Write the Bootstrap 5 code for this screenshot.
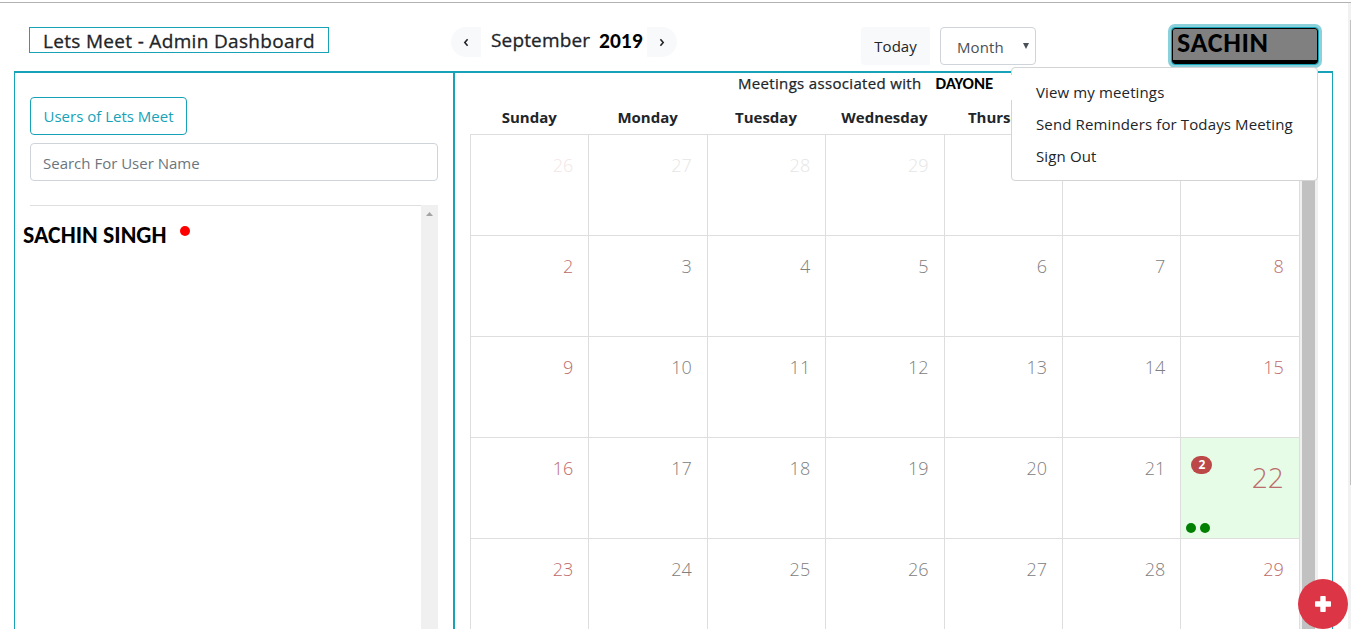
<!DOCTYPE html>
<html lang="en">
<head>
<meta charset="utf-8">
<title>Lets Meet - Admin Dashboard</title>
<link href="https://cdn.jsdelivr.net/npm/bootstrap@5.3.0/dist/css/bootstrap.min.css" rel="stylesheet">
<style>
:root { --teal: #17a2b8; --line: #dedede; }
body { font-family: "Open Sans", "Noto Sans", sans-serif; font-size: 15px; line-height: 24px; color: #212529; height: 629px; overflow: hidden; }
.window-edge { height: 3px; border-bottom: 1px solid #b3b3b3; }
.topbar { height: 68px; padding: 24px 31px 0 29px; }
.page-title { width: 300px; height: 26px; border: 1px solid var(--teal); padding-left: 13px; font-size: 19px; font-weight: 500; line-height: 26px; letter-spacing: .32px; -webkit-text-stroke: .3px; }
.month-nav { margin-left: 122px; height: 30px; }
.nav-arrow { width: 30px; height: 30px; background: #f8f9fa; border: 0; padding: 0; }
.month-name { width: 108px; padding-left: 10px; font-size: 19px; font-weight: 500; line-height: 26px; letter-spacing: .15px; -webkit-text-stroke: .3px; }
.pasted { font-family: Carlito, "Open Sans", sans-serif; font-weight: 700; color: #000; white-space: nowrap; }
.year { width: 58px; padding-left: 10px; font-size: 21.5px; line-height: 28px; }
.btn { --bs-btn-font-size: 15px; --bs-btn-line-height: 24px; --bs-btn-border-radius: 4px; white-space: nowrap; }
.btn-today { margin-left: 184px; width: 69px; height: 38px; padding: 0; background: #f8f9fa; border: 0; border-radius: 4px 0 0 4px; line-height: 24px; }
.view-select { margin-left: 10px; width: 96px; height: 38px; border: 1px solid #ced4da; border-radius: 4px; color: #495057; padding: 7px 6px 0 16px; letter-spacing: .1px; }
.account { margin-left: auto; margin-right: 2px; margin-top: 1px; width: 146px; height: 36px; background: #808080; border: 1px solid #000; border-bottom-width: 4px; border-radius: 3px; outline: 1px solid var(--teal); box-shadow: 0 0 0 4px #8bd1dc; padding-left: 4px; font-size: 28px; line-height: 27px; letter-spacing: .6px; }
.workspace { height: 558px; margin-left: 14px; width: 1319px; border: solid var(--teal); border-width: 2px 1px 0; }
.users { width: 440px; border-right: 2px solid var(--teal); padding: 24px 15px 0; }
.btn-users { width: 157px; height: 38px; color: var(--teal); border: 1px solid var(--teal); padding: 6px 0; background: #fff; }
.form-control { height: 38px; margin-top: 8px; border: 1px solid #ced4da; border-radius: 4px; font-size: 15px; padding: 7px 12px 5px; }
.form-control::placeholder { color: #6c757d; }
.user-list { margin-top: 24px; height: 424px; border-top: 1px solid var(--line); }
.user-name { width: 144px; margin: 15px 0 0 -7px; font-size: 23.8px; line-height: 27px; }
.offline { width: 10px; height: 10px; background: red; margin: 20px 0 0 13px; }
.list-scroll { width: 17px; background: #f0f0f0; margin-top: -1px; padding-top: 7px; }
.calendar { padding-left: 15px; width: 845px; }
.assoc { height: 22px; padding-left: 268px; font-weight: 500; line-height: 21px; white-space: nowrap; letter-spacing: .33px; -webkit-text-stroke: .25px; }
.dayone { font-size: 16.8px; margin-left: 14px; letter-spacing: 0; -webkit-text-stroke: 0; }
.week { display: grid; grid-template-columns: repeat(7, 118.4px); }
.weekdays { height: 39px; width: 829px; font-weight: 700; text-align: center; line-height: 45px; }
.weeks { width: 829.8px; border-left: 1px solid var(--line); }
.day { height: 101px; border-top: 1px solid var(--line); border-right: 1px solid var(--line); text-align: right; padding: 17px 15px 0 0; font-size: 18px; font-weight: 300; line-height: 27px; color: #808080; }
.week > .day:first-child, .week > .day:last-child { color: #bd6b6b; }
.outside { color: #e6e6e6; }
.week > .outside:first-child, .week > .outside:last-child { color: #f3e6e6; }
.week > .today { background: #e6fce6; color: #b87970; font-size: 28px; line-height: 40px; padding-top: 19px; padding-right: 15px; }
.meeting-count { left: 10px; top: 18px; width: 21px; height: 18px; border-radius: 9px; background: #bd4848; color: #fff; font-size: 12px; font-weight: 700; line-height: 18px; text-align: center; }
.meeting-dots { left: 5px; bottom: 5px; gap: 4px; }
.meeting-dots span { width: 10px; height: 10px; background: green; }
.cal-scroll { width: 18px; background: #f0f0f0; padding: 0 3px 0 2px; margin-top: 61px; }
.cal-scroll div { background: #c1c1c1; height: 100%; }
.account-menu { display: block; left: 1011px; top: 67px; width: 307px; height: 114px; padding: 8px 0; border: 1px solid #d3d4d5; border-radius: 4px; }
.account-menu .dropdown-item { font-size: 15px; line-height: 24px; padding: 4px 24px; letter-spacing: .13px; }
.menu-gap { left: 1000px; top: 75px; width: 12px; height: 25px; background: #fff; z-index: 1001; }
.fab { left: 1298px; top: 579px; width: 50px; height: 50px; background: #dc3545; z-index: 5; }
.page-scroll { left: 1348px; top: 3px; width: 3px; height: 626px; background: #f1f1f1; padding: 17px 0 0 2px; }
.page-scroll div { height: 465px; background: #c1c1c1; }
</style>
</head>
<body class="position-relative bg-white">
<div class="window-edge"></div>
<header class="topbar d-flex align-items-start">
  <h1 class="page-title mb-0 text-nowrap">Lets Meet - Admin Dashboard</h1>
  <div class="month-nav d-flex">
    <button class="nav-arrow rounded-start-pill" aria-label="Previous"><svg class="d-block mx-auto" width="8" height="10" viewBox="0 0 8 10" fill="none" stroke="#212529" stroke-width="1.6"><path d="M5.6 2.3 2.8 5.5 5.6 8.7"/></svg></button>
    <div class="month-name">September</div>
    <div class="year pasted">2019</div>
    <button class="nav-arrow rounded-end-pill" aria-label="Next"><svg class="d-block mx-auto" width="8" height="10" viewBox="0 0 8 10" fill="none" stroke="#212529" stroke-width="1.6"><path d="M2.4 2.3 5.2 5.5 2.4 8.7"/></svg></button>
  </div>
  <button class="btn btn-today">Today</button>
  <div class="view-select d-flex justify-content-between"><span>Month</span><svg class="mt-2" width="6" height="6" viewBox="0 0 6 6"><path d="M0 0h6L3 6z" fill="#495057"/></svg></div>
  <div class="account pasted">SACHIN</div>
</header>
<main class="workspace d-flex">
  <section class="users flex-shrink-0">
    <button class="btn btn-users d-block">Users of Lets Meet</button>
    <input class="form-control" placeholder="Search For User Name">
    <div class="user-list d-flex">
      <div class="user-name pasted">SACHIN SINGH</div>
      <span class="offline rounded-circle"></span>
      <div class="list-scroll ms-auto"><svg class="d-block mx-auto" width="7" height="4" viewBox="0 0 7 4"><path d="M0 4h7L3.5 0z" fill="#a3a3a3"/></svg></div>
    </div>
  </section>
  <section class="calendar flex-shrink-0">
    <div class="assoc"><span>Meetings associated with</span><span class="dayone pasted">DAYONE</span></div>
    <div class="week weekdays"><div>Sunday</div><div>Monday</div><div>Tuesday</div><div>Wednesday</div><div>Thursday</div><div></div><div></div></div>
    <div class="weeks">
      <div class="week"><div class="day outside">26</div><div class="day outside">27</div><div class="day outside">28</div><div class="day outside">29</div><div class="day outside"></div><div class="day outside"></div><div class="day"></div></div>
      <div class="week"><div class="day">2</div><div class="day">3</div><div class="day">4</div><div class="day">5</div><div class="day">6</div><div class="day">7</div><div class="day">8</div></div>
      <div class="week"><div class="day">9</div><div class="day">10</div><div class="day">11</div><div class="day">12</div><div class="day">13</div><div class="day">14</div><div class="day">15</div></div>
      <div class="week"><div class="day">16</div><div class="day">17</div><div class="day">18</div><div class="day">19</div><div class="day">20</div><div class="day">21</div><div class="day today position-relative">22<span class="meeting-count position-absolute">2</span><span class="meeting-dots position-absolute d-flex"><span class="rounded-circle"></span><span class="rounded-circle"></span></span></div></div>
      <div class="week"><div class="day">23</div><div class="day">24</div><div class="day">25</div><div class="day">26</div><div class="day">27</div><div class="day">28</div><div class="day">29</div></div>
    </div>
  </section>
  <div class="cal-scroll"><div></div></div>
</main>
<div class="dropdown-menu account-menu"><a class="dropdown-item">View my meetings</a><a class="dropdown-item">Send Reminders for Todays Meeting</a><a class="dropdown-item">Sign Out</a></div>
<div class="menu-gap position-absolute"></div>
<div class="page-scroll position-absolute"><div></div></div>
<button class="fab position-absolute border-0 rounded-circle p-0" aria-label="Add meeting"><svg class="d-block mx-auto" width="18" height="18" viewBox="0 0 18 18"><path d="M7 1h4q.7 0 .7.7v4.6h4.6q.7 0 .7.7v4q0 .7-.7.7h-4.6v4.6q0 .7-.7.7H7q-.7 0-.7-.7v-4.6H1.7Q1 11.7 1 11V7q0-.7.7-.7h4.6V1.7Q6.3 1 7 1z" fill="#fff"/></svg></button>
<script src="https://cdn.jsdelivr.net/npm/bootstrap@5.3.0/dist/js/bootstrap.bundle.min.js"></script>
</body>
</html>
